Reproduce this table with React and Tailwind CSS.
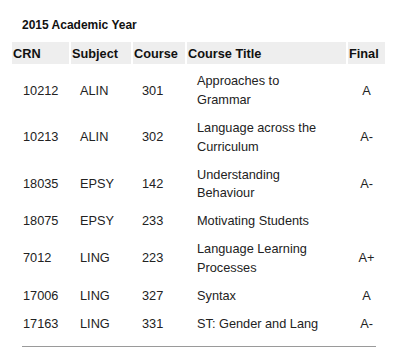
import React from "react";

const rows = [
  ["10212", "ALIN", "301", ["Approaches to", "Grammar"], "A"],
  ["10213", "ALIN", "302", ["Language across the", "Curriculum"], "A-"],
  ["18035", "EPSY", "142", ["Understanding", "Behaviour"], "A-"],
  ["18075", "EPSY", "233", ["Motivating Students"], ""],
  ["7012", "LING", "223", ["Language Learning", "Processes"], "A+"],
  ["17006", "LING", "327", ["Syntax"], "A"],
  ["17163", "LING", "331", ["ST: Gender and Lang"], "A-"],
];

export default function App() {
  return (
    <div
      className="w-[400px] h-[347px] bg-white overflow-hidden text-[#222]"
      style={{ fontFamily: '"Liberation Sans", Arial, Helvetica, sans-serif' }}
    >
      <div className="pt-[18px] pl-[22px] text-[12px] leading-[15px] font-bold text-[#111]">
        2015 Academic Year
      </div>
      <table className="ml-[10px] mt-[7px] border-separate border-spacing-[2px] w-[377px] table-fixed">
        <colgroup>
          <col className="w-[57px]" />
          <col className="w-[60px]" />
          <col className="w-[52px]" />
          <col className="w-[159px]" />
          <col className="w-[37px]" />
        </colgroup>
        <thead>
          <tr>
            {["CRN", "Subject", "Course", "Course Title", "Final"].map((h) => (
              <th
                key={h}
                className="bg-[#eeeeee] h-[22px] p-0 pl-[1px] text-left align-middle text-[12.75px] leading-[15px] font-bold text-[#111] whitespace-nowrap"
              >
                {h}
              </th>
            ))}
          </tr>
        </thead>
        <tbody>
          {rows.map((r, i) => {
            const py = i === 0 ? "pt-[6.4px] pb-[3.7px]" : "py-[3.7px]";
            const cell = `${py} align-middle text-[12.75px] leading-[18.6px]`;
            return (
              <tr key={r[0]}>
                <td className={`${cell} pl-[11px] pr-0`}>{r[0]}</td>
                <td className={`${cell} pl-[9px] pr-0`}>{r[1]}</td>
                <td className={`${cell} pl-[9px] pr-0`}>{r[2]}</td>
                <td className={`${cell} pl-[10px] pr-0`}>
                  {r[3].map((l) => (
                    <div key={l}>{l}</div>
                  ))}
                </td>
                <td className={`${cell} px-0 text-center`}>{r[4]}</td>
              </tr>
            );
          })}
        </tbody>
      </table>
      <div className="ml-[22px] mt-[7px] w-[354px] h-px bg-[#9a9a9a]" />
    </div>
  );
}
